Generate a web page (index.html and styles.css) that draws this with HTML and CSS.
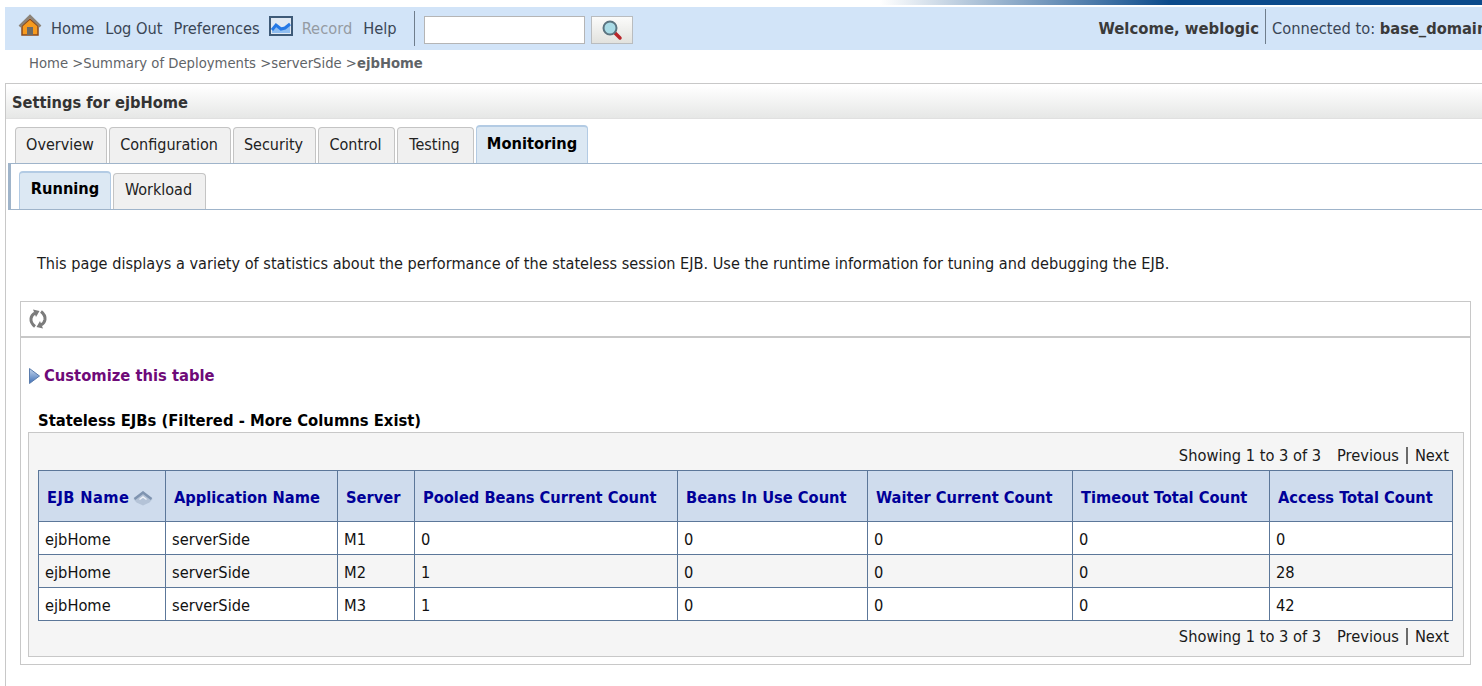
FILE: index.html
```html
<!DOCTYPE html>
<html lang="en">

<head>
    <meta charset="UTF-8">
    <meta name="viewport" content="width=device-width, initial-scale=1.0">
    <title>Settings for ejbHome</title>
    <link rel="stylesheet" href="styles.css">
</head>

<body>
    <div class="top-strip"></div>
    <div class="global-bar">
        <div class="global-left">
            <svg class="icon-home" width="24" height="24" viewBox="0 0 24 24">
                <path d="M4 12v9h16v-9L12 5z" fill="#f79a1e" stroke="#8a4a1c" stroke-width="1.500"/>
                <path d="M1.500 12.500 12 2l10.500 10.500" fill="none" stroke="#8c8378" stroke-width="2.500"/>
                <rect x="9" y="13" width="6" height="8" fill="#6d6a66"/>
            </svg>
            <a class="nav-link nav-home">Home</a>
            <a class="nav-link">Log Out</a>
            <a class="nav-link">Preferences</a>
            <svg class="icon-record" width="24" height="20" viewBox="0 0 24 20">
                <rect x="1" y="1" width="22" height="18" fill="#dfe8f3" stroke="#3e5a78" stroke-width="2"/>
                <path d="M3 17v-4l4-5 5 4 4-1 5-4v10z" fill="#8fbdf0"/>
                <path d="M3 14l4-5 5 4 4-1 5-4" fill="none" stroke="#2478e6" stroke-width="3"/>
            </svg>
            <a class="nav-link nav-disabled">Record</a>
            <a class="nav-link">Help</a>
            <span class="bar-sep"></span>
            <input class="search-input" type="text">
            <button class="search-btn">
                <svg width="22" height="22" viewBox="0 0 22 22">
                    <path d="M13 13l6 6" stroke="#b8252a" stroke-width="3.500" stroke-linecap="round"/>
                    <circle cx="9" cy="9" r="6.500" fill="#a9dbe6" stroke="#5b7480" stroke-width="2"/>
                </svg>
            </button>
        </div>
        <div class="global-right">
            <b class="welcome">Welcome, weblogic</b>
            <span class="connected">Connected to: <b>base_domain</b></span>
        </div>
    </div>
    <div class="breadcrumb">Home &gt;Summary of Deployments &gt;serverSide &gt;<b>ejbHome</b></div>

    <div class="panel">
        <h2 class="panel-title">Settings for ejbHome</h2>
        <div class="tabs">
            <a class="tab tab-w92">Overview</a>
            <a class="tab tab-w122">Configuration</a>
            <a class="tab tab-w83">Security</a>
            <a class="tab tab-w77">Control</a>
            <a class="tab tab-w77">Testing</a>
            <a class="tab tab-active tab-w112">Monitoring</a>
        </div>
        <div class="subtabs">
            <a class="tab subtab tab-active tab-w92">Running</a>
            <a class="tab subtab tab-w93">Workload</a>
        </div>

        <p class="intro">This page displays a variety of statistics about the performance of the stateless session EJB. Use the runtime information for tuning and debugging the EJB.</p>

        <div class="results">
            <div class="toolbar">
                <svg width="20" height="20" viewBox="0 0 20 20">
                    <path d="M7 17.500Q2.500 14 3 9.500Q3.500 6 7 4" fill="none" stroke="#7c7c7c" stroke-width="3"/>
                    <path d="M5 0.500l6.500 1.500-3.500 6z" fill="#7c7c7c"/>
                    <path d="M13 2.500Q17.500 6 17 10.500Q16.500 14 13 16" fill="none" stroke="#7c7c7c" stroke-width="3"/>
                    <path d="M15 19.500l-6.500-1.500 3.500-6z" fill="#7c7c7c"/>
                </svg>
            </div>
            <a class="customize">
                <svg width="13" height="18" viewBox="0 0 13 18">
                    <defs>
                        <linearGradient id="arrow-fill" x1="0" y1="0" x2="0" y2="1">
                            <stop offset="0" stop-color="#c4d6ee"/>
                            <stop offset="1" stop-color="#3f6fb5"/>
                        </linearGradient>
                    </defs>
                    <path d="M1.500 1.500 11.500 9l-10 7.500z" fill="url(#arrow-fill)" stroke="#5a7cad" stroke-linejoin="round"/>
                </svg>
                Customize this table
            </a>
            <h3 class="table-title">Stateless EJBs (Filtered - More Columns Exist)</h3>
            <div class="table-box">
                <div class="pager pager-top">Showing 1 to 3 of 3<span class="pager-gap"></span>Previous<span class="pager-sep"></span>Next</div>
                <table class="data-table">
                    <colgroup>
                        <col class="col-1"><col class="col-2"><col class="col-3"><col class="col-4">
                        <col class="col-5"><col class="col-6"><col class="col-7"><col class="col-8">
                    </colgroup>
                    <thead>
                        <tr>
                            <th><span class="sorted-label">EJB Name</span><svg class="sort-icon" width="20" height="16" viewBox="0 0 20 16">
                                    <path d="M0.500 9 10 1l9.500 8-3 3.500-6.500 3-6.500-3z" fill="#b4c3d7"/>
                                    <path d="M1.500 9 10 2.500 18.500 9" fill="none" stroke="#7f94b0" stroke-width="2.500"/>
                                    <path d="M6.500 9.500 10 7l3.500 2.500" fill="none" stroke="#eef2f8" stroke-width="1.500"/>
                                </svg>
                            </th>
                            <th>Application Name</th>
                            <th>Server</th>
                            <th>Pooled Beans Current Count</th>
                            <th>Beans In Use Count</th>
                            <th>Waiter Current Count</th>
                            <th>Timeout Total Count</th>
                            <th>Access Total Count</th>
                        </tr>
                    </thead>
                    <tbody>
                        <tr><td>ejbHome</td><td>serverSide</td><td>M1</td><td>0</td><td>0</td><td>0</td><td>0</td><td>0</td></tr>
                        <tr class="row-alt"><td>ejbHome</td><td>serverSide</td><td>M2</td><td>1</td><td>0</td><td>0</td><td>0</td><td>28</td></tr>
                        <tr><td>ejbHome</td><td>serverSide</td><td>M3</td><td>1</td><td>0</td><td>0</td><td>0</td><td>42</td></tr>
                    </tbody>
                </table>
                <div class="pager pager-bottom">Showing 1 to 3 of 3<span class="pager-gap"></span>Previous<span class="pager-sep"></span>Next</div>
            </div>
        </div>
    </div>
</body>

</html>
```

FILE: styles.css
```css
html,
body {
    height: 686px;
    overflow: hidden;
}

body {
    margin: 0;
    width: 1482px;
    background: #fff;
    color: #000;
    font-family: "DejaVu Sans Condensed", "DejaVu Sans", sans-serif;
    font-size: 16.3px;
}

.top-strip {
    height: 5px;
    background: linear-gradient(90deg, #fff 880px, #0b4a8b 1170px);
}

.global-bar {
    display: flex;
    justify-content: space-between;
    align-items: center;
    width: 1560px;
    height: 43px;
    margin: 2px 0 0 5px;
    background: #d2e4f8;
    color: #3a4656;
}

.global-left {
    display: flex;
    align-items: center;
    padding-left: 13px;
}

.icon-home {
    margin: -6px 9px 0 0;
}

.icon-record {
    margin: -6px 9px 0 -2px;
}

.nav-link {
    margin-right: 11px;
}

.nav-disabled {
    color: #959ba3;
}

.bar-sep {
    width: 1px;
    height: 35px;
    margin: 0 9px 0 6px;
    background: #6f7d8c;
}

.search-input {
    box-sizing: border-box;
    width: 161px;
    height: 28px;
    margin: 2px 6px 0 0;
    border: 1px solid #b5b5b5;
    background: #fff;
}

.search-btn {
    display: flex;
    align-items: center;
    justify-content: center;
    box-sizing: border-box;
    width: 42px;
    height: 28px;
    margin-top: 2px;
    padding: 0;
    border: 1px solid #b9bcbf;
    background: linear-gradient(#fbfbfa, #e2e2de);
}

.global-right {
    display: flex;
    align-items: center;
    height: 35px;
    margin-top: -5px;
    color: #3a3a3a;
}

.welcome {
    box-sizing: border-box;
    height: 35px;
    padding: 4px 6px 0 0;
    border-right: 1px solid #6f7d8c;
    font-size: 16.5px;
    line-height: 31px;
}

.connected {
    width: 293px;
    padding: 4px 0 0 6px;
    color: #3a4656;
}

.connected b {
    color: #3a3a3a;
}

.breadcrumb {
    height: 33px;
    padding: 3px 0 0 29px;
    box-sizing: border-box;
    font-size: 14.7px;
    line-height: 19px;
    color: #5f6468;
}

.panel {
    width: 1560px;
    height: 610px;
    margin-left: 5px;
    border-top: 1px solid #c8c8c8;
    border-left: 1px solid #c8c8c8;
}

.panel-title {
    height: 32px;
    margin: 2px 0 0;
    padding-left: 6px;
    background: linear-gradient(#fff, #e6e7e6);
    border-bottom: 1px solid #e0e0e0;
    color: #333;
    font-size: 16.3px;
    line-height: 34px;
}

.tabs {
    display: flex;
    align-items: flex-end;
    gap: 2px;
    height: 44px;
    padding-left: 9px;
    box-sizing: border-box;
}

.tab {
    box-sizing: border-box;
    height: 36px;
    padding-right: 2px;
    border: 1px solid #c4c4c4;
    border-bottom: none;
    border-radius: 4px 4px 0 0;
    background: #f0f0f0;
    color: #222;
    text-align: center;
    font-size: 16px;
    line-height: 34px;
}

.tab-active {
    height: 38px;
    padding-right: 0;
    border-color: #b3cbe4;
    border-width: 2px 1px 0;
    background: #dce8f3;
    color: #000;
    font-size: 16.3px;
    font-weight: bold;
}

.subtab {
    line-height: 32px;
}

.tab-w92 { width: 92px; }
.tab-w93 { width: 93px; }
.tab-w122 { width: 122px; }
.tab-w83 { width: 83px; }
.tab-w77 { width: 77px; }
.tab-w112 { width: 112px; }

.subtabs {
    display: flex;
    align-items: flex-end;
    gap: 2px;
    box-sizing: border-box;
    height: 47px;
    margin-left: 2px;
    padding-left: 8px;
    border-top: 1px solid #9fb4ca;
    border-bottom: 1px solid #9fb4ca;
    border-left: 3px solid #9fb4ca;
}

.intro {
    margin: 43px 0 0 31px;
    font-size: 16.15px;
    line-height: 22px;
    color: #1c1c1c;
}

.results {
    box-sizing: border-box;
    width: 1451px;
    height: 364px;
    margin: 26px 0 0 14px;
    border: 1px solid #c8c8c8;
}

.toolbar {
    display: flex;
    align-items: center;
    height: 34px;
    padding-left: 7px;
    border-bottom: 2px solid #c8c8c8;
}

.customize {
    display: flex;
    align-items: center;
    gap: 3px;
    margin: 27px 0 0 7px;
    color: #6e0a78;
    font-size: 16.4px;
    font-weight: bold;
    line-height: 22px;
}

.table-title {
    margin: 23px 0 0 17px;
    color: #000;
    font-size: 16.45px;
    line-height: 22px;
}

.table-box {
    box-sizing: border-box;
    width: 1436px;
    height: 225px;
    margin: 0 0 0 7px;
    padding: 0 10px 0 9px;
    border: 1px solid #c8c8c8;
    background: #f5f5f5;
}

.pager {
    display: flex;
    justify-content: flex-end;
    align-items: center;
    padding-right: 4px;
    color: #1a1a1a;
}

.pager-top {
    height: 29px;
    padding-top: 8px;
}

.pager-bottom {
    height: 30px;
}

.pager-gap {
    width: 16px;
}

.pager-sep {
    width: 2px;
    height: 17px;
    margin: 0 7px;
    background: #6b6b6b;
}

.data-table {
    width: 1414px;
    table-layout: fixed;
    border-collapse: collapse;
}

.col-1 { width: 127px; }
.col-2 { width: 172px; }
.col-3 { width: 77px; }
.col-4 { width: 263px; }
.col-5 { width: 190px; }
.col-6 { width: 205px; }
.col-7 { width: 197px; }
.col-8 { width: 183px; }

.data-table th,
.data-table td {
    padding: 3px 6px 0;
    border: 1px solid #5c7799;
    text-align: left;
    white-space: nowrap;
}

.data-table th {
    height: 47px;
    padding-left: 8px;
    background: #cfdced;
    color: #000099;
}

.data-table td {
    height: 29px;
    background: #fff;
    color: #111;
}

.data-table .row-alt td {
    background: #f5f5f5;
}

.sorted-label {
    letter-spacing: 0.4px;
}

.sort-icon {
    margin-left: 4px;
    vertical-align: -3px;
}
```
